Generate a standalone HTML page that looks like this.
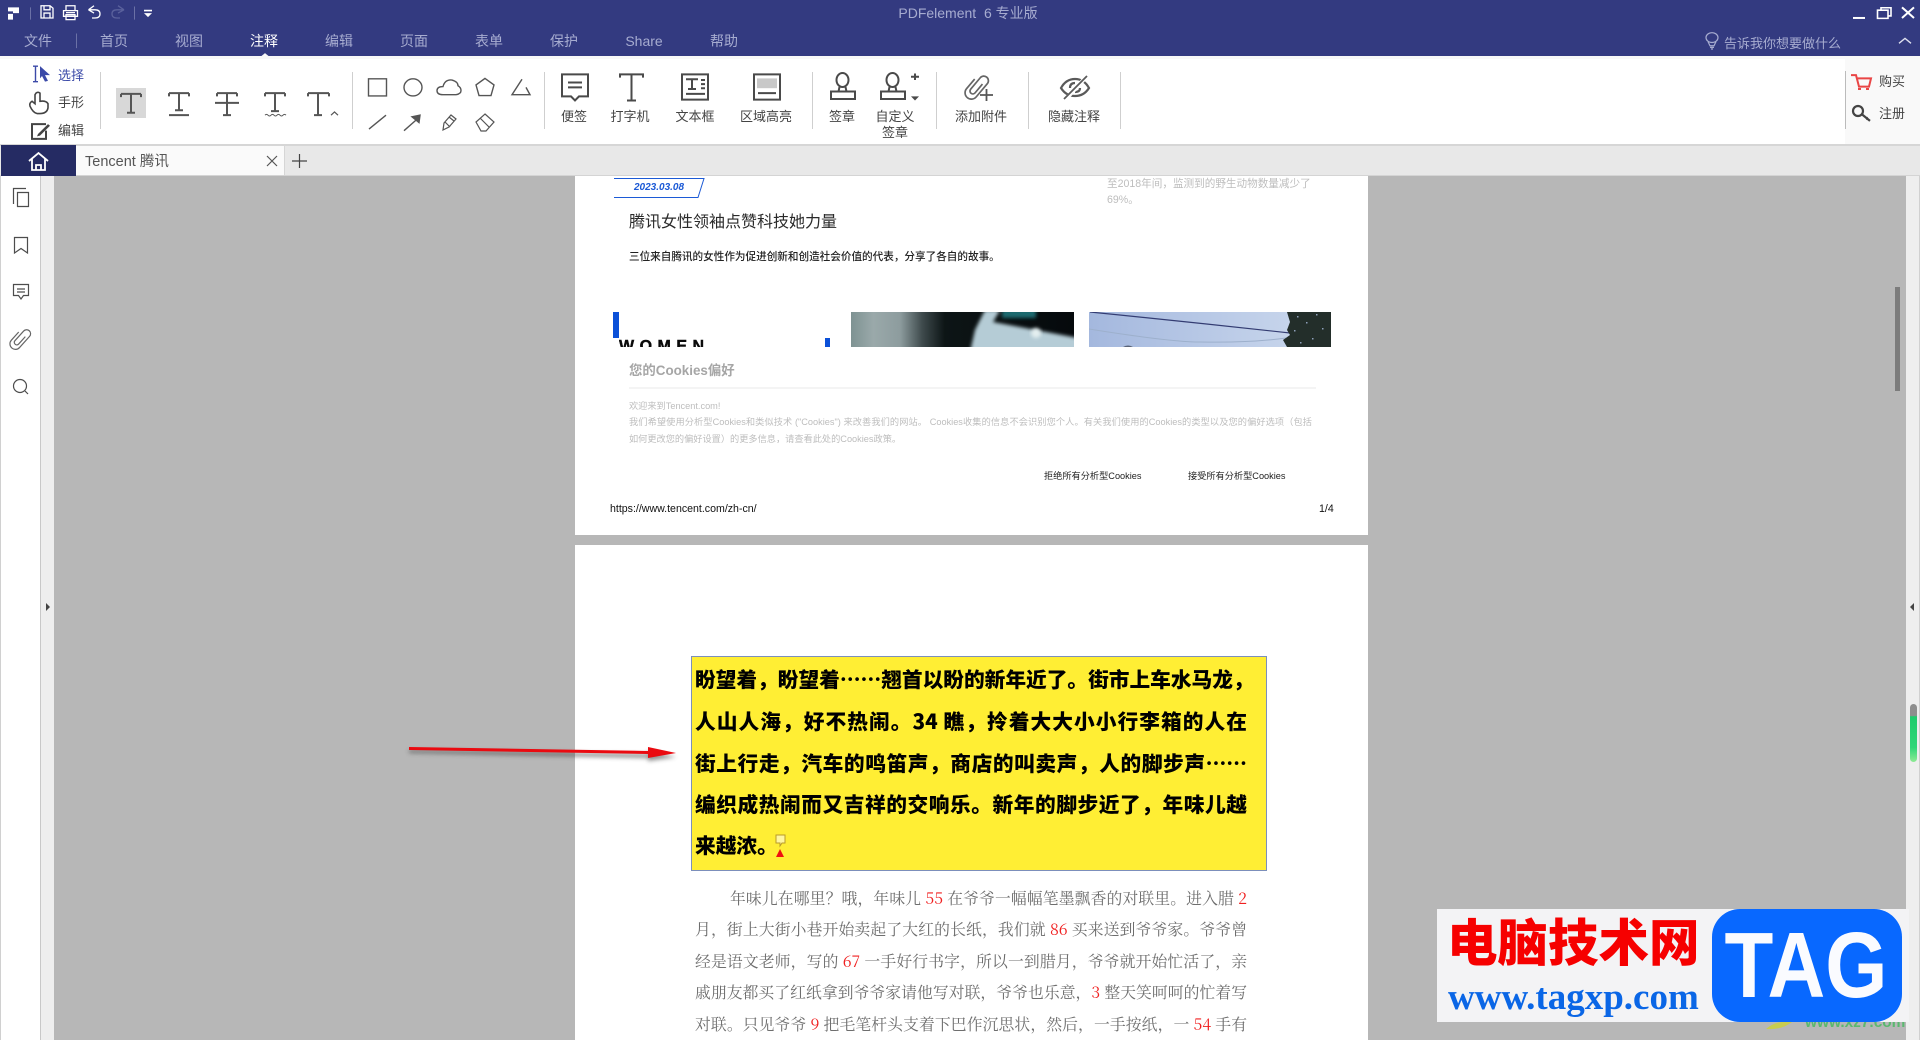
<!DOCTYPE html>
<html lang="zh"><head><meta charset="utf-8"><title>PDFelement</title>
<style>
html,body{margin:0;padding:0;width:1920px;height:1040px;overflow:hidden;background:#b7b7b7}
*{box-sizing:border-box}
body{position:relative;font-family:"Liberation Sans","Noto Sans CJK SC",sans-serif}
.a{position:absolute}
.t{position:absolute;white-space:nowrap;line-height:20px;height:20px}
.c{transform:translateX(-50%)}
.m{font-size:14px;color:#a7acd0;top:31px}
.l{font-size:13px;color:#444;top:107px}
.s{position:absolute;width:1px;background:#cfcfcf;top:72px;height:57px}
.j{position:absolute;white-space:nowrap;text-align:justify;text-align-last:justify}
.y{left:695px;width:552px;font:900 20.7px/30px "Noto Sans CJK SC",sans-serif;color:#000;height:30px}
.b{left:695px;width:552px;font:15.8px/26px "Noto Serif CJK SC","Liberation Serif",serif;color:#6e6e6e;height:26px}
.b i{font-style:normal;color:#f02020}
svg{position:absolute;left:0;top:0;overflow:visible}
.v *{vector-effect:non-scaling-stroke}
</style></head><body>
<!-- header -->
<div class="a" style="left:0;top:0;width:1920px;height:56px;background:#333a80"></div>
<div class="a" style="left:0;top:56px;width:1920px;height:3px;background:#f8f8f8"></div>
<div class="a" style="left:0;top:59px;width:1920px;height:86px;background:#fff"></div>
<div class="a" style="left:1845px;top:59px;width:75px;height:86px;background:#f9f9f9"></div>
<div class="a" style="left:0;top:144px;width:1920px;height:2px;background:#d6d6d6"></div>
<!-- tab bar -->
<div class="a" style="left:0;top:146px;width:1920px;height:29px;background:#e8e8e8"></div>
<div class="a" style="left:0;top:175px;width:1920px;height:1px;background:#d4d4d4"></div>
<div class="a" style="left:1px;top:145px;width:75px;height:31px;background:#252b63"></div>
<div class="a" style="left:76px;top:146px;width:209px;height:29px;background:#fafafa;border-right:1px solid #d6d6d6"></div>
<!-- side areas -->
<div class="a" style="left:1px;top:176px;width:39px;height:864px;background:#fff"></div>
<div class="a" style="left:0;top:176px;width:1px;height:864px;background:#d0d0d0"></div>
<div class="a" style="left:40px;top:176px;width:1px;height:864px;background:#c8c8c8"></div>
<div class="a" style="left:41px;top:176px;width:13px;height:864px;background:#eee"></div>
<div class="a" style="left:1906px;top:176px;width:13px;height:864px;background:#eee"></div>
<div class="a" style="left:1919px;top:176px;width:1px;height:864px;background:#d0d0d0"></div>
<div class="a" style="left:1895px;top:287px;width:5px;height:104px;background:#7c7c7c"></div>
<!-- pages -->
<div class="a" style="left:575px;top:176px;width:793px;height:359px;background:#fff"></div>
<div class="a" style="left:575px;top:545px;width:793px;height:495px;background:#fff"></div>

<!-- page 1 -->
<svg width="1920" height="1040" style="pointer-events:none">
<path d="M614 178.500H704L698 197.500H614" fill="none" stroke="#1c5ad6" stroke-width="1"/>
<rect x="613" y="312" width="6" height="26" fill="#0b50d8"/>
<rect x="825" y="338" width="5" height="9" fill="#0b50d8"/>
<line x1="629" y1="388" x2="1316" y2="388" stroke="#eaeaea" stroke-width="1"/>
<defs><filter id="bl" x="-20%" y="-20%" width="140%" height="140%"><feGaussianBlur stdDeviation="4"/></filter>
<filter id="bl2" x="-20%" y="-40%" width="140%" height="180%"><feGaussianBlur stdDeviation="1.800"/></filter>
<filter id="sh" x="-10%" y="-200%" width="120%" height="500%"><feGaussianBlur stdDeviation="2"/></filter>
<clipPath id="c2"><rect x="851" y="312" width="223" height="35"/></clipPath>
<clipPath id="c3"><rect x="1089" y="312" width="242" height="35"/></clipPath>
<linearGradient id="sky" x1="0" y1="0" x2="1" y2="0"><stop offset="0" stop-color="#a4b8de"/><stop offset="1" stop-color="#cddaee"/></linearGradient>
<linearGradient id="im" x1="0" y1="0" x2="1" y2="0"><stop offset="0" stop-color="#7e9292"/><stop offset=".1" stop-color="#9aa9aa"/><stop offset=".22" stop-color="#8d9c9e"/><stop offset=".32" stop-color="#3e4a4c"/><stop offset=".42" stop-color="#0d1516"/><stop offset="1" stop-color="#05090c"/></linearGradient>
<linearGradient id="gr" x1="0" y1="0" x2="0" y2="1"><stop offset="0" stop-color="#8e8e8e"/><stop offset=".2" stop-color="#8e8e8e"/><stop offset=".22" stop-color="#1ecb6c"/><stop offset=".75" stop-color="#2fd678"/><stop offset="1" stop-color="#8fea95"/></linearGradient></defs>
<g clip-path="url(#c2)">
<rect x="851" y="312" width="223" height="35" fill="url(#im)"/>
<g filter="url(#bl2)">
<path d="M970 352L975 330L985 310L1000 310L993 322L1078 338L1080 355Z" fill="#b5ccd6"/>
<rect x="1002" y="309" width="34" height="9" fill="#1f6a70"/>
</g>
<circle cx="1036" cy="333" r="5" fill="#e4eff0" filter="url(#bl2)"/>
</g>
<g clip-path="url(#c3)">
<rect x="1089" y="312" width="242" height="35" fill="url(#sky)"/>
<path d="M1090 312Q1190 322 1290 333" stroke="#333c72" stroke-width="1.200" fill="none"/>
<path d="M1089 329Q1170 342 1200 342Q1250 343 1286 338" stroke="#9db0cc" stroke-width="1" fill="none"/>
<path d="M1287 312L1290 322L1287 330L1290 335L1283 340L1287 347H1331V312Z" fill="#232e2a"/>
<g fill="#8d9fb8"><rect x="1297" y="316" width="1.500" height="1.500"/><rect x="1306" y="322" width="1.500" height="1.500"/><rect x="1294" y="330" width="1.500" height="1.500"/><rect x="1316" y="314" width="1.500" height="1.500"/><rect x="1322" y="328" width="1.500" height="1.500"/><rect x="1312" y="338" width="1.500" height="1.500"/><rect x="1300" y="342" width="1.500" height="1.500"/></g>
<path d="M1123 347Q1128 344 1133 347Z" fill="#5a6478"/>
</g>
<!-- arrow -->
<path d="M409 750L648 754V751L676 757L648 761V758L409 753Z" fill="#444" opacity=".6" filter="url(#sh)"/>
<path d="M409 747L648 751V747L676 753L648 758V754L409 750Z" fill="#ea0a10"/>
<!-- yellow box -->
<rect x="691.500" y="656.500" width="575" height="214" fill="#ffee34" stroke="#7c8fbb" stroke-width="1"/>
<!-- note marker -->
<path d="M776 835H785V843H782L780 846V843H776Z" fill="#fff6a0" stroke="#b89b2a" stroke-width="1"/>
<path d="M780 849L784 857H776Z" fill="#f01010"/>
</svg>

<div class="t" style="left:634px;top:178px;font:italic bold 10px/20px 'Liberation Sans',sans-serif;color:#1c5ad6">2023.03.08</div>
<div class="t" style="left:629px;top:213px;font-size:16px;color:#2a2a2a">腾讯女性领袖点赞科技她力量</div>
<div class="t" style="left:629px;top:247px;font-size:10.6px;color:#222;font-weight:500">三位来自腾讯的女性作为促进创新和创造社会价值的代表，分享了各自的故事。</div>
<div class="t" style="left:1107px;top:174px;font-size:10.6px;color:#bdbdbd">至2018年间，监测到的野生动物数量减少了</div>
<div class="t" style="left:1107px;top:190px;font-size:10.6px;color:#bdbdbd">69%。</div>
<div class="a" style="left:619px;top:338px;height:9px;width:120px;overflow:hidden;font:bold 16px/18px 'Liberation Sans',sans-serif;letter-spacing:5.500px;color:#0a0a0a;white-space:nowrap;-webkit-text-stroke:.4px #0a0a0a">WOMEN</div>
<div class="t" style="left:629px;top:361px;font-size:13.400px;font-weight:700;color:#a6a6a6">您的Cookies偏好</div>
<div class="t" style="left:629px;top:396px;font-size:9.200px;color:#bdbdbd">欢迎来到Tencent.com!</div>
<div class="j" style="left:629px;top:412px;width:683px;font-size:9.200px;line-height:20px;color:#bdbdbd">我们希望使用分析型Cookies和类似技术 ("Cookies") 来改善我们的网站。 Cookies收集的信息不会识别您个人。有关我们使用的Cookies的类型以及您的偏好选项（包括</div>
<div class="t" style="left:629px;top:429px;font-size:9.200px;color:#bdbdbd">如何更改您的偏好设置）的更多信息，请查看此处的Cookies政策。</div>
<div class="t" style="left:1044px;top:466px;font-size:9.200px;color:#222">拒绝所有分析型Cookies</div>
<div class="t" style="left:1188px;top:466px;font-size:9.200px;color:#222">接受所有分析型Cookies</div>
<div class="t" style="left:610px;top:499px;font-size:10.600px;color:#111">https://www.tencent.com/zh-cn/</div>
<div class="t" style="left:1319px;top:499px;font-size:10.600px;color:#111">1/4</div>

<!-- page 2 text -->
<div class="j y" style="top:663px">盼望着，盼望着……翘首以盼的新年近了。街市上车水马龙，</div>
<div class="j y" style="top:705px">人山人海，好不热闹。34 瞧，拎着大大小小行李箱的人在</div>
<div class="j y" style="top:747px">街上行走，汽车的鸣笛声，商店的叫卖声，人的脚步声……</div>
<div class="j y" style="top:788px">编织成热闹而又吉祥的交响乐。新年的脚步近了，年味儿越</div>
<div class="t" style="left:695px;top:829px;height:30px;font:900 20.700px/30px 'Noto Sans CJK SC',sans-serif;color:#000">来越浓。</div>
<div class="j b" style="top:885px;left:730px;width:517px">年味儿在哪里？哦，年味儿 <i>55</i> 在爷爷一幅幅笔墨飘香的对联里。进入腊 <i>2</i></div>
<div class="j b" style="top:916px">月，街上大街小巷开始卖起了大红的长纸，我们就 <i>86</i> 买来送到爷爷家。爷爷曾</div>
<div class="j b" style="top:948px">经是语文老师，写的 <i>67</i> 一手好行书字，所以一到腊月，爷爷就开始忙活了，亲</div>
<div class="j b" style="top:979px">戚朋友都买了红纸拿到爷爷家请他写对联，爷爷也乐意，<i>3</i> 整天笑呵呵的忙着写</div>
<div class="j b" style="top:1011px">对联。只见爷爷 <i>9</i> 把毛笔杆头支着下巴作沉思状，然后，一手按纸，一 <i>54</i> 手有</div>

<!-- menu text -->
<div class="t m c" style="left:38px">文件</div>
<div class="t m c" style="left:114px">首页</div>
<div class="t m c" style="left:189px">视图</div>
<div class="t m c" style="left:264px;color:#fff">注释</div>
<div class="t m c" style="left:339px">编辑</div>
<div class="t m c" style="left:414px">页面</div>
<div class="t m c" style="left:489px">表单</div>
<div class="t m c" style="left:564px">保护</div>
<div class="t m c" style="left:644px">Share</div>
<div class="t m c" style="left:724px">帮助</div>
<div class="t c" style="left:968px;top:3px;font-size:14px;color:#a7acd0">PDFelement&nbsp; 6 专业版</div>
<div class="t" style="left:1724px;top:34px;font-size:13px;color:#a7acd0">告诉我你想要做什么</div>

<!-- labels -->
<div class="t l" style="left:58px;top:66px;color:#3b4aa8">选择</div>
<div class="t l" style="left:58px;top:93px">手形</div>
<div class="t l" style="left:58px;top:121px">编辑</div>
<div class="t l c" style="left:574px">便签</div>
<div class="t l c" style="left:630px">打字机</div>
<div class="t l c" style="left:695px">文本框</div>
<div class="t l c" style="left:766px">区域高亮</div>
<div class="t l c" style="left:842px">签章</div>
<div class="t l c" style="left:895px">自定义</div>
<div class="t l c" style="left:895px;top:123px">签章</div>
<div class="t l c" style="left:981px">添加附件</div>
<div class="t l c" style="left:1074px">隐藏注释</div>
<div class="t l c" style="left:1892px;top:72px">购买</div>
<div class="t l c" style="left:1892px;top:104px">注册</div>
<div class="t" style="left:85px;top:152px;font-size:14.500px;color:#555">Tencent 腾讯</div>

<div class="s" style="left:100px"></div>
<div class="s" style="left:352px"></div>
<div class="s" style="left:544px"></div>
<div class="s" style="left:812px"></div>
<div class="s" style="left:936px"></div>
<div class="s" style="left:1028px"></div>
<div class="s" style="left:1120px"></div>
<div class="s" style="left:1845px;top:71px;height:58px;background:#bbb"></div>
<div class="a" style="left:116px;top:88px;width:30px;height:30px;background:#d8d8d8"></div>

<!-- watermark -->
<div class="t" style="left:1805px;top:1013px;font:bold 15.400px/20px 'Liberation Sans',sans-serif;color:#5bb870;width:103px;overflow:hidden">www.xz7.com</div>
<svg width="1920" height="1040"><path d="M1766 1029Q1776 1020 1792 1022Q1782 1030 1766 1029Z" fill="#c8cc50"/></svg>
<div class="a" style="left:1437px;top:909px;width:472px;height:113px;background:#f3f3f5"></div>
<div class="t" style="left:1447px;top:911px;height:56px;font:900 50.500px/56px 'Noto Sans CJK SC',sans-serif;color:#f60000">电脑技术网</div>
<div class="t" style="left:1448px;top:977px;height:42px;font:bold 37px/42px 'Liberation Serif',serif;color:#0a66e6">www.tagxp.com</div>
<div class="a" style="left:1712px;top:909px;width:190px;height:113px;background:#0868ff;border-radius:28px"></div>
<div class="t" style="left:1706px;top:915px;height:100px;width:200px;font:bold 93px/100px 'Liberation Sans',sans-serif;color:#fafbff;text-align:center;transform:scaleX(.86)">TAG</div>

<!-- icons -->
<svg class="v" width="1920" height="1040" fill="none" stroke="#4a4a4a" stroke-width="1.500">
<g transform="scale(1,.8167)">
<!-- title bar -->
<path d="M8 9H19V16H13V14H8ZM8 17H13V24H8Z" fill="#fff" stroke="none"/>
<g stroke="#6b71a6" stroke-width="1"><path d="M30.500 9V24M134.500 8V24M76.500 41V59"/></g>
<g stroke="#fff" stroke-width="1.300">
<path d="M41 7H50L53 10V22H41ZM44 7V12H50V7M44 22V16H50V22"/>
<path d="M66 13V7H75V13M63.500 13H77.500V20H63.500ZM66 18H75V24H66ZM66 15.500H75"/>
<path d="M88.500 12L94 7M88.500 12L94 16M89 12H95Q100 12 100 17T95 22H92"/>
</g>
<path d="M124 12L118 7M124 12L118 16M123 12H117Q112 12 112 17T117 22H120" stroke="#5a619c" stroke-width="1.300"/>
<path d="M144 12H152V14H144ZM144 16H152L148 21Z" fill="#fff" stroke="none"/>
<!-- controls -->
<path d="M1853 22H1865" stroke="#fff" stroke-width="2"/>
<path d="M1877.500 12.500H1888V22.500H1877.500ZM1881 12V9.500H1891V19.500H1888" stroke="#fff" stroke-width="1.600"/>
<path d="M1902 9L1914 22M1914 9L1902 22" stroke="#fff" stroke-width="2"/>
<path d="M261 69L265 65L269 69Z" fill="#f8f8f8" stroke="none"/>
<circle cx="1712" cy="46" r="6" stroke="#a7acd0" stroke-width="1.200"/>
<path d="M1708 51L1710 56H1714L1716 51M1710 58H1714M1711 60H1713" stroke="#a7acd0" stroke-width="1.200"/>
<path d="M1899 53L1905 47L1911 53" stroke="#dfe1ef" stroke-width="1.400"/>
<!-- left tool icons -->
<path d="M33 81H38M33 100H38M35.500 81V100" stroke="#3b4aa8" stroke-width="1.400"/>
<path d="M40 81L50 92H45L48 99L45 100L42 93L40 96Z" fill="#3b4aa8" stroke="none"/>
<path d="M36 114Q38 112 40 114V124Q46 123 48 127V132Q47 139 40 139H37Q33 138 30 130Q29 126 32 124L35 127V116Z" stroke="#444" stroke-width="1.600"/>
<path d="M46 152H32V170H46V160" stroke="#444" stroke-width="2"/>
<path d="M38 164L48 152L50 154L40 166L37 167Z" fill="#444" stroke="none"/>
<!-- text tools -->
<g stroke="#555" stroke-width="2">
<path d="M121 115H141M121 115V119M141 115V119M131 115V138M127 138H135"/>
<path d="M169 114H189M169 114V118M189 114V118M179 114V135M175 135H183M169 141H189"/>
<path d="M217 114H237M217 114V118M237 114V118M227 114V141M223 141H231M215 126H239"/>
<path d="M265 114H285M265 114V118M285 114V118M275 114V136M271 136H279"/>
<path d="M265 141q1.500 -2 3 0t3 0t3 0t3 0t3 0t3 0t3 0" stroke-width="1"/>
<path d="M308 114H329M308 114V118M329 114V118M318 114V141M314 141H322"/>
<path d="M331 141L334.500 137L338 141" stroke-width="1.200"/>
</g>
<!-- shapes -->
<g stroke="#555" stroke-width="1.400">
<rect x="368.500" y="96.500" width="18" height="21"/>
<ellipse cx="413" cy="107" rx="9" ry="10.500"/>
<path d="M443 116Q437 116 437 111T443 106Q445 97 452 98Q458 100 458 105Q461 107 461 111T456 116Z"/>
<path d="M485 96L494 104L491 117H479L476 104Z"/>
<path d="M522 97L512 116H530L526 107"/>
<path d="M369 158L386 141"/>
<path d="M404 160L417 146" /><path d="M412 143L420 141L419 150Z" fill="#555"/>
</g>
<!-- big tools -->
<g stroke="#4a4a4a" stroke-width="2">
<path d="M562 91H588V118H579L575 123L571 118H562ZM568 101H582M568 107H582"/>
<path d="M620 95V91H643V95M631.500 91V123M627 123H636"/>
<rect x="682" y="91" width="26" height="31"/><path d="M686 97H698M692 97V109M688 109H696M701 98H705M701 103H705M701 108H705M686 115H705" />
<rect x="754" y="91" width="26" height="31"/><path d="M758 114H776" />
<rect x="757" y="96" width="20" height="12" fill="#c8c8c8" stroke="none"/>
<path d="M911 94H919M915 90V98"/>
</g>
<path d="M911 118H919L915 123Z" fill="#4a4a4a" stroke="none"/>
<!-- cart -->
<path d="M1851 92H1856L1859 106H1869L1871 96H1857" stroke="#e94545" stroke-width="2"/>
<path d="M1858 109H1861M1866 109H1869" stroke="#e94545" stroke-width="2"/>
<path d="M1862 140L1870 148M1866 146L1868 144" stroke="#444" stroke-width="2.200"/>
</g>
<!-- pencil, eraser -->
<g stroke="#555" stroke-width="1.200">
<path d="M443 130L444 123L451 115L456 119L449 127ZM445 122L450 127M449 117L454 121"/>
<path d="M485 114L494 122L486 131H481L476 122ZM480 118L489 127"/>
</g>
<!-- stamps -->
<g stroke="#4a4a4a" stroke-width="2">
<ellipse cx="842.500" cy="80" rx="6" ry="7"/><path d="M839.500 87L838.500 91.500M845.500 87L846.500 91.500"/><rect x="831" y="91.500" width="24" height="7.500"/>
<ellipse cx="892.500" cy="80" rx="6" ry="7"/><path d="M889.500 87L888.500 91.500M895.500 87L896.500 91.500"/><rect x="881" y="91.500" width="24" height="7.500"/>
</g>
<!-- attach -->
<path transform="translate(977,87) rotate(40) scale(1.150)" stroke="#666" stroke-width="1.700" d="M2 -5V5a2.500 2.500 0 0 1 -5 0V-8a4 4 0 0 1 8 0V7a5.500 5.500 0 0 1 -11 0V-4"/>
<path d="M980 95H993M986.500 89V101" stroke="#555" stroke-width="1.800"/>
<!-- hide eye -->
<g stroke="#5a5a5a" stroke-width="2.200">
<path d="M1061 88Q1066 79 1075 79Q1084 79 1089 88Q1084 96 1075 96Q1066 96 1061 88Z"/>
<path d="M1070 88Q1070 83 1075 83M1080 88Q1080 92 1075 92"/>
<path d="M1065 100L1087 76" stroke="#fff" stroke-width="4"/>
<path d="M1064 99L1087 76" stroke-width="1.800"/>
</g>
<circle cx="1858" cy="111" r="5" stroke="#444" stroke-width="2.200"/>
<!-- tab -->
<path d="M29 161L38.500 153L48 161M32 159V170H45V159M36 170V165H41V170" stroke="#fff" stroke-width="1.800"/>
<path d="M267 156L277 166M277 156L267 166" stroke="#555" stroke-width="1.200"/>
<path d="M292 161H307M299.500 154V168" stroke="#444" stroke-width="1.200"/>
<!-- sidebar icons -->
<g stroke="#4d4d4d" stroke-width="1.200">
<path d="M13.500 204V188.500H26M17.500 192.500H28.500V206.500H17.500Z"/>
<path d="M14.500 237.500H27.500V253L21 248.500L14.500 253Z"/>
<path d="M13.500 284.500H28.500V295.500H23.500L21 299L18.500 295.500H13.500ZM17 289H25M17 292H25"/>
<path transform="translate(20.500,339) rotate(42)" stroke="#666" d="M2 -5V5a2.500 2.500 0 0 1 -5 0V-8a4 4 0 0 1 8 0V7a5.500 5.500 0 0 1 -11 0V-4"/>
<circle cx="20" cy="386" r="6.500"/><path d="M25 391L28 394"/>
</g>
<path d="M46 603L50 607L46 611Z" fill="#444" stroke="none"/>
<path d="M1914 603L1910 607L1914 611Z" fill="#444" stroke="none"/>
<rect x="1910" y="704" width="7" height="58" rx="3.500" fill="url(#gr)" stroke="none"/>
</svg>
</body></html>
